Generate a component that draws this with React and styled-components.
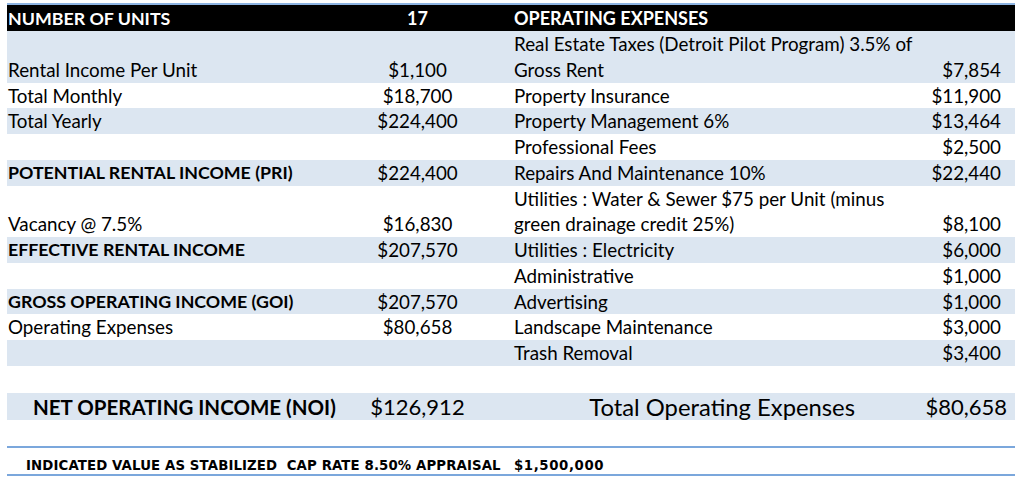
import React from 'react';
import styled, { createGlobalStyle } from 'styled-components';

const Global = createGlobalStyle`
  body {
    margin: 0;
    background: #fff;
    font-family: Lato, "Liberation Sans", sans-serif;
    color: #000;
  }
`;

const COLS = '323px 175px 395px 115px';

const Page = styled.div`
  width: 1008px;
  padding: 3px 7px 0;
  white-space: nowrap;
`;

const Header = styled.div`
  display: grid;
  grid-template-columns: ${COLS};
  border-top: 2px solid #8db4e2;
  background: #000;
  color: #fff;
  font-size: 18px;
  line-height: 26px;
`;

const Row = styled.div`
  display: grid;
  grid-template-columns: ${COLS};
  align-items: end;
  background: ${p => (p.$shade ? '#dce6f1' : '#fff')};
  font-size: 18.8px;
  line-height: 25.77px;
`;

const Label = styled.div`
  padding-left: 1px;
  font-weight: ${p => (p.$bold ? 700 : 400)};
  font-size: ${p => (p.$bold ? '17.8px' : 'inherit')};
`;

const Value = styled.div`
  text-align: center;
  font-weight: ${p => (p.$bold ? 700 : 400)};
`;

const ExpLabel = styled.div`
  padding-left: 9px;
  white-space: pre;
  font-weight: ${p => (p.$bold ? 700 : 400)};
`;

const ExpValue = styled.div`
  text-align: right;
  padding-right: ${p => p.$inset || 14}px;
`;

const TotalRow = styled.div`
  display: grid;
  grid-template-columns: ${COLS};
  align-items: center;
  margin-top: 27px;
  background: #dce6f1;
  height: 27px;
  font-size: 22px;
`;

const TotalLabel = styled.div`
  padding-left: 26px;
  font-weight: 700;
  font-size: 20.5px;
`;

const TotalExpLabel = styled.div`
  text-align: right;
  padding-right: 45px;
  font-size: 23.8px;
`;

const Appraisal = styled.div`
  display: grid;
  grid-template-columns: 498px 1fr;
  margin-top: 26px;
  border-top: 2px solid #7ba7dc;
  border-bottom: 2px solid #7ba7dc;
  height: 25px;
  align-items: end;
  padding-bottom: 1px;
  font-weight: 700;
  font-size: 13.3px;
  letter-spacing: 0.12px;
  font-family: "DejaVu Sans", sans-serif;
`;

const AppraisalLabel = styled.div`
  padding-left: 19px;
  white-space: pre;
`;

const AppraisalValue = styled.div`
  padding-left: 9px;
  letter-spacing: 0.6px;
`;

const rows = [
  ['Rental Income Per Unit', '$1,100', 'Real Estate Taxes (Detroit Pilot Program) 3.5% of\nGross Rent', '$7,854'],
  ['Total Monthly', '$18,700', 'Property Insurance', '$11,900'],
  ['Total Yearly', '$224,400', 'Property Management 6%', '$13,464'],
  ['', '', 'Professional Fees', '$2,500'],
  ['POTENTIAL RENTAL INCOME (PRI)', '$224,400', 'Repairs And Maintenance 10%', '$22,440', true],
  ['Vacancy @ 7.5%', '$16,830', 'Utilities : Water & Sewer $75 per Unit (minus\ngreen drainage credit 25%)', '$8,100'],
  ['EFFECTIVE RENTAL INCOME', '$207,570', 'Utilities : Electricity', '$6,000', true],
  ['', '', 'Administrative', '$1,000'],
  ['GROSS OPERATING INCOME (GOI)', '$207,570', 'Advertising', '$1,000', true],
  ['Operating Expenses', '$80,658', 'Landscape Maintenance', '$3,000'],
  ['', '', 'Trash Removal', '$3,400'],
];

export default function App() {
  return (
    <Page>
      <Global />
      <Header>
        <Label $bold>NUMBER OF UNITS</Label>
        <Value $bold>17</Value>
        <ExpLabel $bold>OPERATING EXPENSES</ExpLabel>
        <div />
      </Header>
      {rows.map(([label, value, exp, expValue, bold], i) => (
        <Row key={i} $shade={i % 2 === 0}>
          <Label $bold={bold}>{label}</Label>
          <Value>{value}</Value>
          <ExpLabel>{exp}</ExpLabel>
          <ExpValue>{expValue}</ExpValue>
        </Row>
      ))}
      <TotalRow>
        <TotalLabel>NET OPERATING INCOME (NOI)</TotalLabel>
        <Value>$126,912</Value>
        <TotalExpLabel>Total Operating Expenses</TotalExpLabel>
        <ExpValue $inset={8}>$80,658</ExpValue>
      </TotalRow>
      <Appraisal>
        <AppraisalLabel>INDICATED VALUE AS STABILIZED  CAP RATE 8.50% APPRAISAL</AppraisalLabel>
        <AppraisalValue>$1,500,000</AppraisalValue>
      </Appraisal>
    </Page>
  );
}
